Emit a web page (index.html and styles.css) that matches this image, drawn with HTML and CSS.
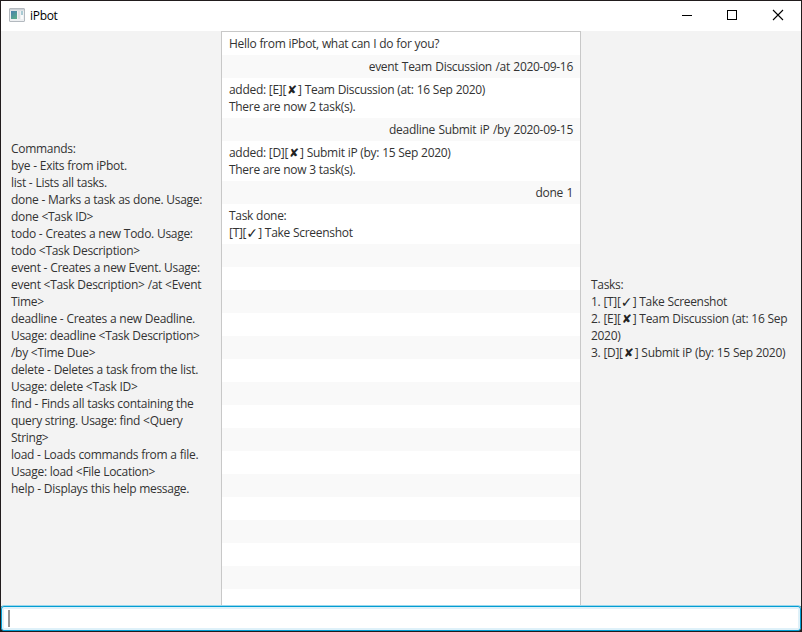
FILE: index.html
```html
<!DOCTYPE html>
<html lang="en">
<head>
<meta charset="utf-8">
<title>iPbot</title>
<link rel="stylesheet" href="styles.css">
</head>
<body>
<div class="window">
  <header class="titlebar">
    <svg class="app-icon" width="16" height="14" viewBox="0 0 16 14">
      <defs><linearGradient id="pane" x1="0" y1="0" x2="0.6" y2="1"><stop offset="0" stop-color="#477fae"/><stop offset="1" stop-color="#58a98b"/></linearGradient></defs>
      <rect x=".5" y=".5" width="15" height="13" rx=".5" fill="#eef0f2" stroke="#b3b9bf"/>
      <rect x="1" y="1" width="14" height="1.5" fill="#cbd1d6"/>
      <rect x="2" y="3" width="6" height="8" fill="url(#pane)"/>
      <rect x="9" y="3" width="2" height="8" fill="#dcdfe2"/>
      <rect x="12" y="3" width="2" height="4" fill="#a9cbd4"/>
      <rect x="12" y="7" width="2" height="4" fill="#f9fafb"/>
    </svg>
    <h1 class="title">iPbot</h1>
    <div class="controls">
      <svg width="45" height="30" viewBox="0 0 45 30"><path d="M17 14.5h10" stroke="#000" shape-rendering="crispEdges"/></svg>
      <svg width="45" height="30" viewBox="0 0 45 30"><rect x="17.5" y="9.5" width="9" height="9" fill="none" stroke="#000"/></svg>
      <svg width="45" height="30" viewBox="0 0 45 30"><path d="M18 9l10 10M28 9l-10 10" stroke="#000" stroke-width="1.1"/></svg>
    </div>
  </header>
  <main class="content">
    <aside class="side">
      <p>Commands:<br>bye - Exits from iPbot.<br>list - Lists all tasks.<br>done - Marks a task as done. Usage:<br>done &lt;Task ID&gt;<br>todo - Creates a new Todo. Usage:<br>todo &lt;Task Description&gt;<br>event - Creates a new Event. Usage:<br>event &lt;Task Description&gt; /at &lt;Event<br>Time&gt;<br>deadline - Creates a new Deadline.<br>Usage: deadline &lt;Task Description&gt;<br>/by &lt;Time Due&gt;<br>delete - Deletes a task from the list.<br>Usage: delete &lt;Task ID&gt;<br>find - Finds all tasks containing the<br>query string. Usage: find &lt;Query<br>String&gt;<br>load - Loads commands from a file.<br>Usage: load &lt;File Location&gt;<br>help - Displays this help message.</p>
    </aside>
    <section class="chat">
      <div class="row">Hello from iPbot, what can I do for you?</div>
      <div class="row user">event Team Discussion /at 2020-09-16</div>
      <div class="row">added: [E][<span class="mark">✘</span>] Team Discussion (at: 16 Sep 2020)<br>There are now 2 task(s).</div>
      <div class="row user">deadline Submit iP /by 2020-09-15</div>
      <div class="row">added: [D][<span class="mark">✘</span>] Submit iP (by: 15 Sep 2020)<br>There are now 3 task(s).</div>
      <div class="row user">done 1</div>
      <div class="row">Task done:<br>[T][<span class="mark check">✓</span>] Take Screenshot</div>
      <div class="row"></div><div class="row"></div><div class="row"></div><div class="row"></div>
      <div class="row"></div><div class="row"></div><div class="row"></div><div class="row"></div>
      <div class="row"></div><div class="row"></div><div class="row"></div><div class="row"></div>
      <div class="row"></div><div class="row"></div><div class="row"></div><div class="row"></div>
    </section>
    <aside class="side tasks">
      <p>Tasks:<br>1. [T][<span class="mark check">✓</span>] Take Screenshot<br>2. [E][<span class="mark">✘</span>] Team Discussion (at: 16 Sep<br>2020)<br>3. [D][<span class="mark">✘</span>] Submit iP (by: 15 Sep 2020)</p>
    </aside>
  </main>
  <footer class="command"><span class="caret"></span></footer>
</div>
</body>
</html>
```

FILE: styles.css
```css
* { box-sizing: border-box; }
body {
  margin: 0;
  background: #211c1d;
  font: 12px/17px "Open Sans", "Noto Sans", sans-serif;
  letter-spacing: -0.3px;
  word-spacing: 0.2px;
  color: #333;
  overflow: hidden;
}
.window {
  width: 802px;
  height: 632px;
  padding: 1px;
  display: flex;
  flex-direction: column;
}
.titlebar {
  height: 30px;
  flex: none;
  display: flex;
  align-items: center;
  padding: 0 1px 0 8px;
  background: #fff;
}
.app-icon { margin: 0 5px 2px 0; }
.title {
  margin: 0 0 1px;
  font-size: 12px;
  font-weight: 400;
  color: #000;
}
.controls { margin-left: auto; display: flex; }
.content {
  flex: 1;
  min-height: 0;
  display: grid;
  grid-template-columns: 220px 360px 220px;
  background: #f3f3f3;
}
.side {
  display: flex;
  align-items: center;
  padding: 0 0 1px 10px;
  white-space: nowrap;
}
.side p { margin: 0; }
.chat {
  border: solid #c8c8c8;
  border-width: 1px 1px 0;
  background: #fff;
  overflow: hidden;
  min-height: 0;
}
.row {
  min-height: 23px;
  padding: 3px 7px;
  white-space: nowrap;
}
.row:nth-child(even) { background: #f9f9f9; }
.user { text-align: right; word-spacing: 0.7px; }
.mark {
  display: inline-block;
  width: 12px;
  height: 17px;
  padding-top: 1px;
  vertical-align: top;
  text-align: center;
  letter-spacing: 0;
  color: #222;
  font-family: "DejaVu Sans", sans-serif;
}
.check { font-size: 14px; }
.command {
  height: 25px;
  flex: none;
  display: flex;
  align-items: center;
  padding-left: 6px;
  background: #fff;
  border: 1px solid #039ed3;
  border-radius: 3px;
  box-shadow: inset 0 0 0 2px #dff1f9, 0 -1px 0 #9bd7ec;
}
.caret { width: 2px; height: 17px; background: #969696; }
```
